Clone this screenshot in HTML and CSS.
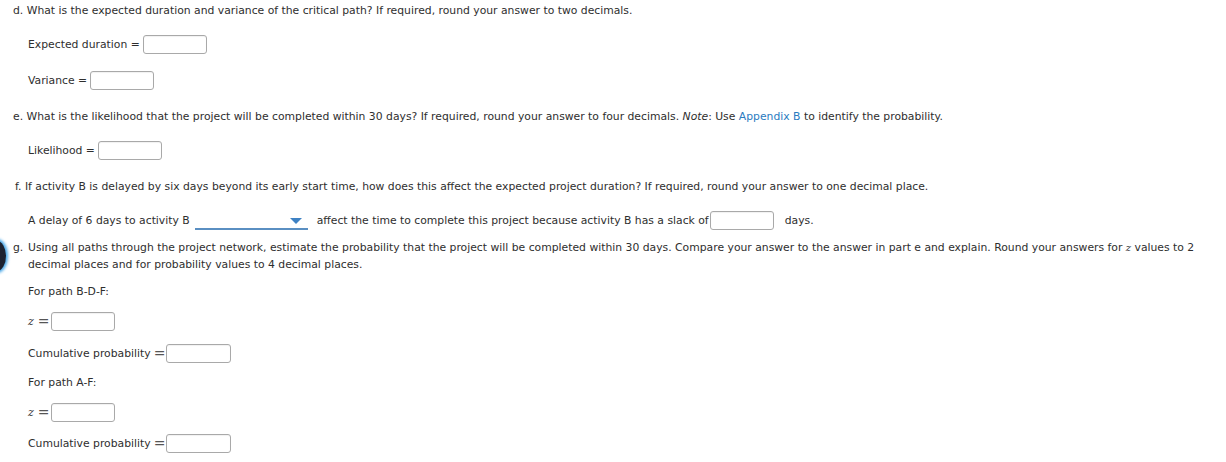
FILE: index.html
```html
<!DOCTYPE html>
<html>
<head>
<meta charset="utf-8">
<link rel="stylesheet" href="styles.css">
</head>
<body>
<div class="page">
  <div class="badge"></div>

  <p class="q q-d">d. What is the expected duration and variance of the critical path? If required, round your answer to two decimals.</p>
  <div class="row r-exp"><span>Expected duration =</span><span class="box"></span></div>
  <div class="row r-var"><span>Variance =</span><span class="box"></span></div>

  <p class="q q-e">e. What is the likelihood that the project will be completed within 30 days? If required, round your answer to four decimals. <i>Note</i>: Use <a class="link">Appendix B</a> to identify the probability.</p>
  <div class="row r-lik"><span>Likelihood =</span><span class="box"></span></div>

  <p class="q q-f">f. If activity B is delayed by six days beyond its early start time, how does this affect the expected project duration? If required, round your answer to one decimal place.</p>
  <div class="row r-delay">
    <span>A delay of 6 days to activity B</span>
    <span class="select"><span class="arrow"></span></span>
    <span>affect the time to complete this project because activity B has a slack of</span><span class="box box-slack"></span><span class="days">days.</span>
  </div>

  <div class="q q-g"><span class="lbl">g.</span><span class="gtext">Using all paths through the project network, estimate the probability that the project will be completed within 30 days. Compare your answer to the answer in part e and explain. Round your answers for <i class="zi">z</i> values to 2 decimal places and for probability values to 4 decimal places.</span></div>

  <p class="sub s-bdf">For path B-D-F:</p>
  <div class="row r-z1"><i class="mz">z</i><span class="meq">=</span><span class="box"></span></div>
  <div class="row r-c1"><span>Cumulative probability</span><span class="meq meq-c">=</span><span class="box box-cum"></span></div>

  <p class="sub s-af">For path A-F:</p>
  <div class="row r-z2"><i class="mz">z</i><span class="meq">=</span><span class="box"></span></div>
  <div class="row r-c2"><span>Cumulative probability</span><span class="meq meq-c">=</span><span class="box box-cum"></span></div>
</div>
</body>
</html>
```

FILE: styles.css
```css
html, body {
  margin: 0;
  padding: 0;
  background: #ffffff;
}
.page {
  position: relative;
  width: 1226px;
  height: 462px;
  overflow: hidden;
  font-family: "DejaVu Sans", Verdana, sans-serif;
  font-size: 10.8px;
  color: #2e2e2e;
  display: flex;
  flex-direction: column;
}
p { margin: 0; }
.badge {
  position: absolute;
  left: -12px;
  top: 241px;
  width: 18px;
  height: 30px;
  border-radius: 50%;
  background: #1c2230;
  box-shadow: 0 0 3px 2px #4aa8e8;
}
.q {
  line-height: 17px;
  padding-left: 13px;
}
.q-d { margin-top: 2px; }
.q-e { margin-top: 18px; }
.q-f { margin-top: 18px; padding-left: 15px; }
.q-g { margin-top: 9px; display: flex; }
.q-g .lbl { width: 15px; flex: none; }
.q-g .gtext { width: 1185px; }
.zi { font-family: "DejaVu Serif", serif; font-size: 10px; line-height: 10px; }
.link { color: #2a7bbf; text-decoration: none; }
.row {
  display: flex;
  align-items: center;
  height: 20px;
  padding-left: 28px;
}
.row > span:first-child { margin-right: 3px; }
.r-exp { margin-top: 15px; }
.r-var { margin-top: 16px; }
.r-lik { margin-top: 15px; }
.r-delay { margin-top: 15px; }
.r-delay > span:first-child { margin-right: 0; }
.box {
  width: 62px;
  height: 17px;
  border: 1px solid #a9a9a9;
  border-radius: 3px;
  box-shadow: inset 0 1px 1px rgba(0,0,0,0.06);
  background: #fff;
  flex: none;
}
.box-cum { width: 63px; }
.select {
  position: relative;
  width: 113px;
  height: 18px;
  margin: 0 9px 0 5px;
  border-bottom: 2px solid #5a8fc2;
  flex: none;
}
.arrow {
  position: absolute;
  right: 6px;
  top: 8px;
  width: 0;
  height: 0;
  border-left: 6px solid transparent;
  border-right: 6px solid transparent;
  border-top: 6px solid #3e82c4;
}
.box-slack { margin-left: 1px; }
.days { margin-left: 11px; }
.sub {
  line-height: 17px;
  padding-left: 28px;
}
.s-bdf { margin-top: 10px; }
.s-af { margin-top: 11px; }
.r-z1 { margin-top: 11px; }
.r-c1 { margin-top: 12px; }
.r-z2 { margin-top: 11px; }
.r-c2 { margin-top: 11px; }
.mz {
  font-family: "DejaVu Serif", serif;
  font-size: 11px;
  margin-right: 4px;
}
.meq {
  font-family: "DejaVu Serif", serif;
  font-size: 14px;
  color: #555;
  margin-right: 1px;
  line-height: 14px;
}
.row > .meq-c { margin-left: 0; margin-right: 1px; }
```
